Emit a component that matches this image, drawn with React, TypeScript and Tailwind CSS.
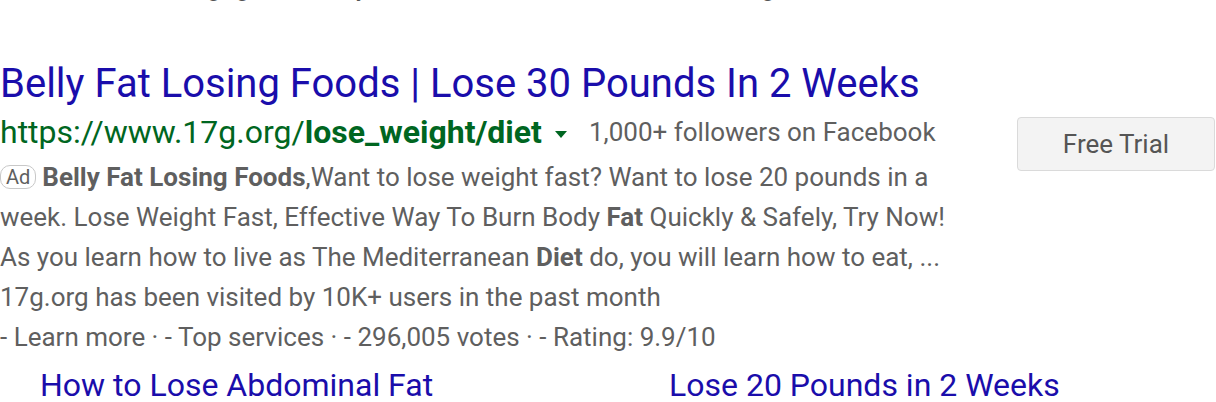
export default function App() {
  return (
    <div className="h-[402px] w-[1216px] overflow-hidden bg-white font-['Roboto',sans-serif]">
      <div className="-mt-[22px] h-[28px] overflow-hidden text-[26px] leading-[40px] text-[#545454]">
        <div className="-mt-[11px]">to educate and engage and fully motivate and inform those seeking more</div>
      </div>
      <div className="mt-[54px] flex gap-[72px]">
        <div className="w-[945px] shrink-0">
          <div className="whitespace-nowrap text-[40px] leading-[48px] text-[#1a0dab]">
            Belly Fat Losing Foods | Lose 30 Pounds In 2 Weeks
          </div>
          <div className="mt-[2px] flex h-[44px] items-center whitespace-nowrap">
            <span className="text-[32px] text-[#006621]">
              https://www.17g.org/<b className="font-bold">lose_weight/diet</b>
            </span>
            <span className="ml-[13px] mr-[22px] mt-[4px] h-0 w-0 border-x-[6px] border-t-[7px] border-x-transparent border-t-[#006621]" />
            <span className="text-[26px] text-[#5f5f5f]">1,000+ followers on Facebook</span>
          </div>
          <div className="mt-[3px] text-[26px] leading-[40px] text-[#5f5f5f]">
            <div>
              <span className="mr-[6px] inline-block rounded-[10px] border border-[#c8c8c8] px-[5px] align-[2px] text-[20px] leading-[22px]">
                Ad
              </span>
              <b className="font-bold">Belly Fat Losing Foods</b>,Want to lose weight fast? Want to lose 20 pounds in a
            </div>
            <div>
              week. Lose Weight Fast, Effective Way To Burn Body <b className="font-bold">Fat</b> Quickly &amp; Safely, Try Now!
            </div>
            <div>
              As you learn how to live as The Mediterranean <b className="font-bold">Diet</b> do, you will learn how to eat, ...
            </div>
            <div>17g.org has been visited by 10K+ users in the past month</div>
            <div>- Learn more · - Top services · - 296,005 votes · - Rating: 9.9/10</div>
          </div>
        </div>
        <div className="pt-[57px]">
          <button className="h-[54px] w-[198px] rounded-[4px] border border-[#dadada] bg-[#f3f3f3] text-[26px] text-[#555555]">
            Free Trial
          </button>
        </div>
      </div>
      <div className="mt-[10px] flex whitespace-nowrap text-[32px] leading-[36px] text-[#1a0dab]">
        <div className="w-[669px] pl-[40px]">How to Lose Abdominal Fat</div>
        <div>Lose 20 Pounds in 2 Weeks</div>
      </div>
    </div>
  );
}
